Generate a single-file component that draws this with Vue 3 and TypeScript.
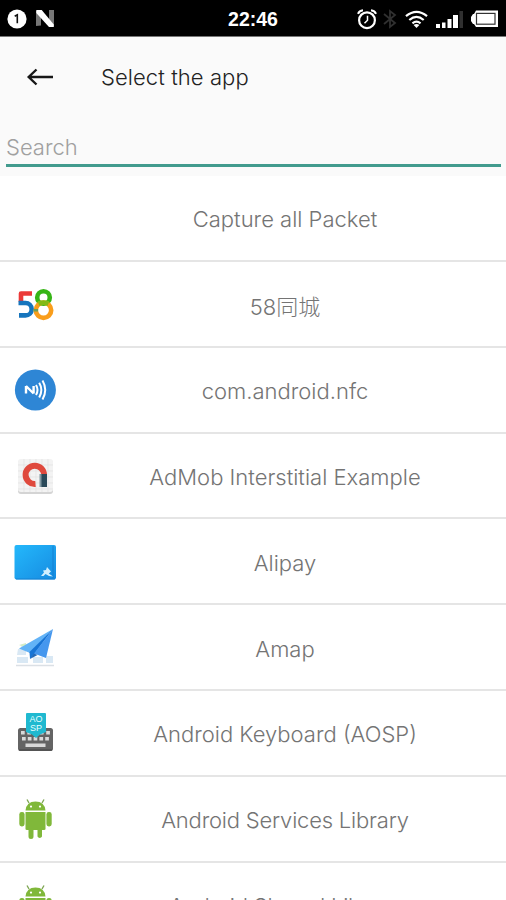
<script setup lang="ts">
interface AppEntry {
  name: string
  icon: string
  tight?: boolean
}

const apps: AppEntry[] = [
  { name: 'Capture all Packet', icon: '' },
  { name: '58同城', icon: 'city' },
  { name: 'com.android.nfc', icon: 'nfc' },
  { name: 'AdMob Interstitial Example', icon: 'admob' },
  { name: 'Alipay', icon: 'alipay' },
  { name: 'Amap', icon: 'amap' },
  { name: 'Android Keyboard (AOSP)', icon: 'keyboard' },
  { name: 'Android Services Library', icon: 'android', tight: true },
  { name: 'Android Shared Library', icon: 'android', tight: true },
]
const keys: number[] = [0, 1, 2, 3, 4]
</script>

<template>
  <main class="screen">
    <header class="status">
      <div class="notices">
        <svg width="20" height="20" viewBox="0 0 20 20">
          <circle cx="10" cy="10" r="9.6" fill="#fff" />
          <path d="M7.7 7.3 10.3 5.8V14.2" fill="none" stroke="#111" stroke-width="1.6" />
        </svg>
        <svg width="20" height="20" viewBox="0 0 20 20">
          <path d="M1 2H6V16.5L1 17ZM14 1H19V17L14 14Z" fill="#777" />
          <path d="M1.3 1H6.7L18.8 15.6V18H14L1.3 4Z" fill="#fff" />
        </svg>
      </div>
      <time class="clock">22:46</time>
      <div class="signals">
        <svg width="20" height="21" viewBox="0 0 20 21" fill="none" stroke="#fff">
          <circle cx="10" cy="11.2" r="7.9" stroke-width="2.2" />
          <path d="M1 4.8Q2.2 1.7 6 1.3M14 1.3Q17.8 1.7 19 4.8" stroke-width="2" />
          <path d="M10.5 6.8V11.3L7.5 14.2" stroke-width="1.5" />
        </svg>
        <svg class="bluetooth" width="14" height="20" viewBox="0 0 14 20" fill="none" stroke="#303030" stroke-width="1.8">
          <path d="M1 5 12 14 7 18V2L12 6 1 15" />
        </svg>
        <svg class="wifi" width="23" height="19" viewBox="0 0 24 19" fill="none" stroke="#fff" stroke-width="2.3">
          <path d="M1 6Q12-3 23 6M4.5 10Q12 3.6 19.5 10M7.8 13.5Q12 10 16.2 13.5" />
          <path d="M9 15.2Q12 13 15 15.2L12 18.3Z" fill="#fff" stroke="none" />
        </svg>
        <svg class="cell" width="29" height="19" viewBox="0 0 29 19" fill="#fff">
          <path d="M1 14H5V18H1ZM7 12.5H10.5V18H7ZM12.5 9H16.5V18H12.5ZM18 5H23V18H18Z" />
          <path d="M24.5 1H28V18H24.5Z" fill="#303030" />
        </svg>
        <svg class="battery" width="29" height="18" viewBox="0 0 29 18">
          <path d="M6 .5H28V17H6L4 14H3L1 11V7L3 4H4Z" fill="#fff" />
          <rect x="6.5" y="3.4" width="18.5" height="10.8" fill="#fff" stroke="#333" stroke-width="1.2" />
        </svg>
      </div>
    </header>

    <div class="toolbar">
      <svg class="back" width="28" height="20" viewBox="0 0 28 20" fill="none" stroke="#171717" stroke-width="2.4">
        <path d="M10.5 2.5 2.7 10 10.5 17.5M2.7 10H27" />
      </svg>
      <h1>Select the app</h1>
    </div>

    <div class="search-area">
      <input class="search" type="text" placeholder="Search" aria-label="Search">
    </div>

    <ul class="apps">
      <li v-for="app in apps" :key="app.name" class="app">
        <div class="icon">
          <svg v-if="app.icon === 'city'" width="42" height="42" viewBox="0 0 42 42" fill="none" stroke-width="4.6">
            <path d="M18 10.5H7V19" stroke="#eb3937" stroke-linejoin="round" />
            <path d="M4.5 20H11.5A6.2 6.2 0 0 1 11.5 32.4H5" stroke="#1675bd" />
            <circle cx="29.5" cy="14.5" r="6.3" stroke="#37b517" />
            <circle cx="29.5" cy="27.2" r="7.7" stroke="#f99d1b" />
            <path d="M24.5 20.5Q29.5 18.8 34.5 20.5" stroke="#83b915" />
            <path d="M21.8 26V28.5" stroke="#6b9e57" />
          </svg>
          <svg v-else-if="app.icon === 'nfc'" width="42" height="42" viewBox="0 0 42 42" fill="none" stroke="#fff">
            <circle cx="21.4" cy="21" r="20.5" fill="#2e86d5" stroke="none" />
            <path d="M12 17V24.5M12 17 19.6 24.5M19.6 17V24.5" stroke-width="2.4" />
            <path d="M22 16Q25 21 22 26M25.2 13.8Q29.5 21 25.2 28.5M28.5 11.5Q34 21 28.5 30.5" stroke-width="2" />
          </svg>
          <svg v-else-if="app.icon === 'admob'" width="42" height="42" viewBox="0 0 42 42">
            <rect x="4" y="5" width="35" height="34" rx="3" fill="#d4d4d4" />
            <rect x="4" y="4" width="35" height="33" rx="3" fill="#f3f3f3" />
            <path d="M10 4V37M16 4V37M22 4V37M28 4V37M34 4V37M4 10H39M4 16H39M4 22H39M4 28H39M4 34H39" stroke="#e1e1e1" stroke-width=".7" />
            <path d="M21.5 29A9.2 9.2 0 1 1 30 20" fill="none" stroke="#df493d" stroke-width="6" />
            <path d="M27 19H33V32H27Z" fill="#294858" />
            <path d="M25.5 19H27.5V32H25.5Z" fill="#8197a0" />
          </svg>
          <svg v-else-if="app.icon === 'alipay'" width="42" height="42" viewBox="0 0 42 42">
            <defs>
              <linearGradient id="wallet-blue" x2="1" y2="1"><stop stop-color="#24b8fb" /><stop offset="1" stop-color="#168be1" /></linearGradient>
            </defs>
            <rect x=".5" y="4" width="41.5" height="34.5" rx="2" fill="url(#wallet-blue)" />
            <path d="M2 38H41M39 5V37" stroke="#137ccd" stroke-width=".8" />
            <path d="M33 26 37 30.5 34.8 32.5 39 35.5 35 35 31.5 33 29.5 35H27L30 31.5 29 29.5 32 29Z" fill="#d0efff" />
          </svg>
          <svg v-else-if="app.icon === 'amap'" width="42" height="42" viewBox="0 0 42 42">
            <path d="M4 22H12V28H3ZM3 30H14V36H3ZM19 30H29V36H19ZM32 29H39V36H32ZM8 17H15V20H7Z" fill="#d9e8f4" />
            <path d="M5 18 12 16V21Z" fill="#d4edc7" />
            <path d="M2 38.5H40" stroke="#dbe0e5" stroke-width="1.5" />
            <path d="M39 2 5 21.5 16 26 39 2Z" fill="#62b3f7" />
            <path d="M39 2 15.5 25 16 32 20 27.5Z" fill="#1774d5" />
            <path d="M39 2 20 26.5 32 31Z" fill="#4597ee" />
            <path d="M16 32 20 26.5 23.5 28Z" fill="#2368b6" />
          </svg>
          <svg v-else-if="app.icon === 'keyboard'" width="42" height="42" viewBox="0 0 42 42">
            <rect x="4" y="16" width="35" height="23" rx="2.5" fill="#646464" />
            <path d="M5 38H38" stroke="#4f4f4f" stroke-width="1.5" />
            <g fill="#d9d9d9">
              <rect v-for="key in keys" :key="key" :x="7 + key * 6.3" y="19" width="3.7" height="3.5" />
              <rect v-for="key in keys" :key="key + 5" :x="8 + key * 5.8" y="25" width="3.7" height="3.5" />
              <rect x="11.5" y="31.5" width="20" height="3.5" />
            </g>
            <path d="M13 1H31Q32 1 32 2V20L26 22.5 22 26 18 22.5 12 20V2Q12 1 13 1Z" fill="#20b9d0" />
            <text class="key-label" x="22" y="10.2">AO</text>
            <text class="key-label" x="22" y="18.5">SP</text>
          </svg>
          <svg v-else-if="app.icon === 'android'" width="42" height="42" viewBox="0 0 42 42" fill="#80b83a">
            <path d="M15 5 13 1.5M28 5 30 1.5" stroke="#80a756" stroke-width="1.4" />
            <path d="M11.5 12.5Q12.5 3.5 21.5 3.5T31.5 12.5Z" />
            <path d="M11.5 14H31.5V31Q31.5 32 30 32H28V38.5A2.5 2.5 0 0 1 23.5 38.5V32H19.5V38.5A2.5 2.5 0 0 1 14.5 38.5V32H13Q11.5 32 11.5 31Z" />
            <rect x="5.3" y="14" width="5.3" height="14.5" rx="2.4" />
            <rect x="32.4" y="14" width="5.3" height="14.5" rx="2.4" />
            <circle cx="17" cy="8.6" r="1.1" fill="#fff" />
            <circle cx="26" cy="8.6" r="1.1" fill="#fff" />
          </svg>
        </div>
        <span class="name" :class="{ tight: app.tight }">{{ app.name }}</span>
      </li>
    </ul>
  </main>
</template>

<style>
body { margin: 0; }
</style>

<style scoped>
* { box-sizing: border-box; }
.screen { width: 506px; height: 900px; overflow: hidden; background: #fafafa; font-family: Inter, "Noto Sans CJK SC", sans-serif; font-weight: 300; }
.status { display: grid; grid-template-columns: 1fr auto 1fr; align-items: center; height: 37px; padding: 2px 7px 0; background: #000; border-bottom: 1px solid #777; color: #fff; }
.notices { display: flex; gap: 8px; }
.clock { padding-top: 1px; font: bold 19.5px "Liberation Sans", sans-serif; }
.signals { display: flex; align-items: center; justify-content: flex-end; }
.bluetooth { margin-left: 6px; }
.wifi { margin-left: 8px; }
.cell { margin-left: 7px; }
.battery { margin-left: 6px; }
.toolbar { display: flex; align-items: center; height: 81px; padding: 0 0 2px 26px; }
.toolbar h1 { margin: 0 0 0 47px; color: #222; font-size: 22px; font-weight: 300; letter-spacing: .08px; }
.search-area { height: 58px; padding: 10px 5px 0 6px; }
.search { display: block; width: 100%; height: 39px; padding: 1px 0 0; border: 0; border-bottom: 3px solid #429b8e; outline: 0; background: transparent; font: inherit; font-size: 22px; }
.search::placeholder { color: #a0a0a0; opacity: 1; }
.apps { margin: 0; padding: 0; list-style: none; background: #fff; }
.app { display: flex; align-items: center; height: 85.85px; padding: 1px 0 0 14px; border-bottom: 2px solid #e5e5e5; }
.icon { width: 42px; height: 42px; flex: none; }
.icon svg { display: block; }
.name { flex: 1; padding: 2px 0 0 8px; color: #747474; font-size: 22px; text-align: center; white-space: nowrap; }
.name.tight { letter-spacing: -.2px; }
.key-label { fill: #e7ffff; font: 9px "Liberation Sans", sans-serif; text-anchor: middle; }
</style>
